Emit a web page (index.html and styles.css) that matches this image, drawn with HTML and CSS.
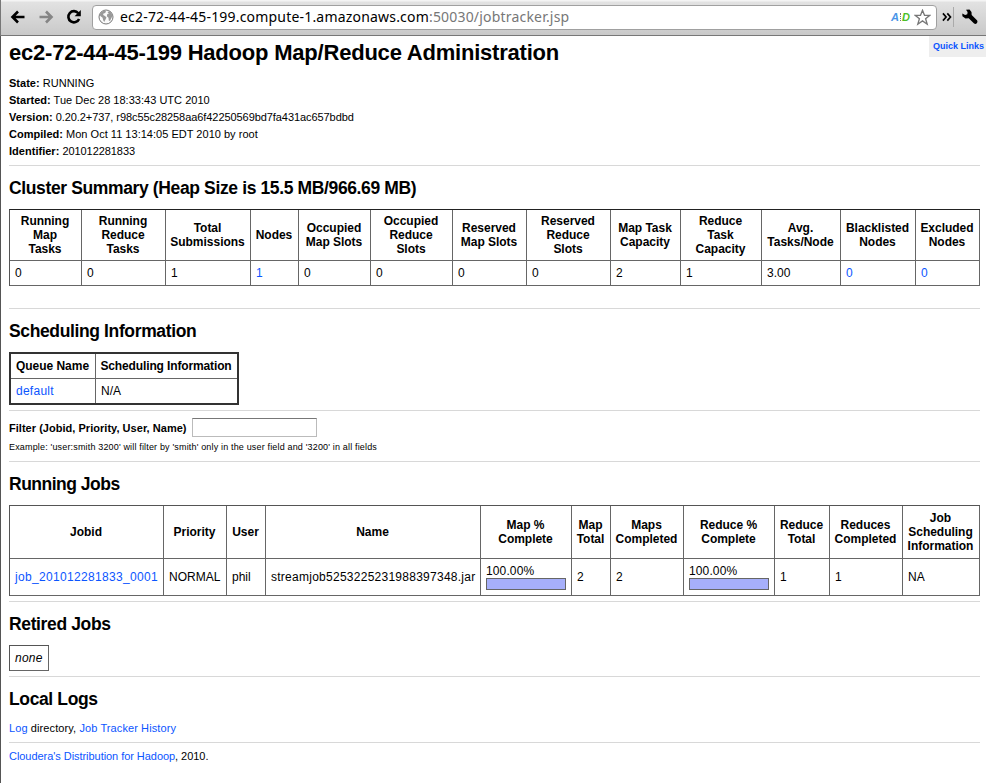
FILE: index.html
```html
<!DOCTYPE html>
<html lang="en">
<head>
<meta charset="utf-8">
<title>ec2-72-44-45-199 Hadoop Map/Reduce Administration</title>
<link rel="stylesheet" href="styles.css">
</head>
<body>
<div class="toolbar">
  <svg class="nav-icon back" width="16" height="14" viewBox="0 0 16 14"><path d="M14.500 7H3M8 1.500L2.500 7 8 12.500"/></svg>
  <svg class="nav-icon forward" width="16" height="14" viewBox="0 0 16 14"><path d="M1.500 7H13M8 1.500L13.500 7 8 12.500"/></svg>
  <svg class="nav-icon reload" width="16" height="16" viewBox="0 0 16 16"><path d="M12.300 4.200A5.600 5.600 0 1 0 13.100 10"/><path class="solid" d="M14.800 1v6.300H8.600z"/></svg>
  <div class="omnibox">
    <svg class="globe" width="16" height="16" viewBox="0 0 16 16"><circle cx="8" cy="8" r="7" fill="#fafafa" stroke="#777"/><path fill="#999" d="M3 3.500l3-2 2 .8-.8 1.600-1.700.7-.4 1.500 1.900 1 1.500 1.300-1 2-1.300 2.600-1-1.800-.6-2.500L2.300 7l-.6-1.500zM9.500 3l2-1 2 2 1 3-1.200 2.300-1.300 2.700-1.200-.6-.3-2.600-1.700-1.500.5-2.300 1.500-.3z"/></svg>
    <span class="url">ec2-72-44-45-199.compute-1.amazonaws.com<span class="path">:50030/jobtracker.jsp</span></span>
    <span class="aid"><b class="a">A</b><i class="bar"></i><b class="d">D</b></span>
    <svg class="star" width="17" height="17" viewBox="0 0 17 17"><path d="M8.500 1.300l2 5h5.300l-4.200 3.400 1.600 5.500-4.700-3.300-4.700 3.300 1.600-5.500L1.200 6.300h5.300z"/></svg>
  </div>
  <svg class="more" width="11" height="10" viewBox="0 0 11 10"><path d="M1 1l3.500 4L1 9M5.800 1l3.500 4-3.500 4"/></svg>
  <span class="divider"></span>
  <svg class="wrench" width="16" height="16" viewBox="0 0 16 16"><path d="M4 .8L7.500.6l2 2.400.2 3 5.500 5.500q.8 1.500-.4 2.700t-2.700.3L6.700 9.200l-3.200.3L.4 7.200l-.1-2.600 2.800 1.500 2.200-.8.3-2.200z"/></svg>
</div>
<main class="page">
  <a class="quick" href="#"><span>Quick Links</span></a>
  <h1><span>ec2-72-44-45-199 Hadoop Map/Reduce Administration</span></h1>
  <div class="facts">
    <div><b>State:</b> RUNNING</div>
    <div><b>Started:</b> Tue Dec 28 18:33:43 UTC 2010</div>
    <div><b>Version:</b> <span class="version">0.20.2+737, r98c55c28258aa6f42250569bd7fa431ac657bdbd</span></div>
    <div><b>Compiled:</b> Mon Oct 11 13:14:05 EDT 2010 by root</div>
    <div><b>Identifier:</b> <span class="version">201012281833</span></div>
  </div>
  <section class="cluster">
    <h2 class="h-cluster">Cluster Summary (Heap Size is 15.5 MB/966.69 MB)</h2>
    <table class="grid summary">
      <colgroup><col class="w72"><col class="w84"><col class="w85"><col class="w48"><col class="w72"><col class="w82"><col class="w74"><col class="w84"><col class="w70"><col class="w81"><col class="w79"><col class="w75"><col class="w64"></colgroup>
      <tr><th>Running<br>Map<br>Tasks</th><th>Running<br>Reduce<br>Tasks</th><th>Total<br>Submissions</th><th>Nodes</th><th>Occupied<br>Map Slots</th><th>Occupied<br>Reduce<br>Slots</th><th>Reserved<br>Map Slots</th><th>Reserved<br>Reduce<br>Slots</th><th>Map Task<br>Capacity</th><th>Reduce<br>Task<br>Capacity</th><th>Avg.<br>Tasks/Node</th><th>Blacklisted<br>Nodes</th><th>Excluded<br>Nodes</th></tr>
      <tr><td>0</td><td>0</td><td>1</td><td><a href="#">1</a></td><td>0</td><td>0</td><td>0</td><td>0</td><td>2</td><td>1</td><td>3.00</td><td><a href="#">0</a></td><td><a href="#">0</a></td></tr>
    </table>
  </section>
  <section class="scheduling">
    <h2 class="h-sched">Scheduling Information</h2>
    <table class="grid queues">
      <colgroup><col class="w85"><col class="w141"></colgroup>
      <tr><th>Queue Name</th><th class="tight">Scheduling Information</th></tr>
      <tr><td><a class="loose" href="#">default</a></td><td>N/A</td></tr>
    </table>
  </section>
  <section class="filter">
    <div class="filter-row"><label for="filter">Filter (Jobid, Priority, User, Name)</label><input id="filter" type="text"></div>
    <div class="example"><span>Example: 'user:smith 3200' will filter by 'smith' only in the user field and '3200' in all fields</span></div>
  </section>
  <section class="running">
    <h2 class="h-running">Running Jobs</h2>
    <table class="grid jobs">
      <colgroup><col class="w154"><col class="w63"><col class="w39"><col class="w215"><col class="w91"><col class="w39"><col class="w73"><col class="w91"><col class="w55"><col class="w73"><col class="w77"></colgroup>
      <tr><th>Jobid</th><th>Priority</th><th>User</th><th>Name</th><th>Map %<br>Complete</th><th>Map<br>Total</th><th>Maps<br>Completed</th><th>Reduce %<br>Complete</th><th>Reduce<br>Total</th><th>Reduces<br>Completed</th><th>Job<br>Scheduling<br>Information</th></tr>
      <tr><td><a class="jobid" href="#">job_201012281833_0001</a></td><td>NORMAL</td><td>phil</td><td class="loose">streamjob5253225231988397348.jar</td><td><span class="percent">100.00%</span><div class="progress"></div></td><td>2</td><td>2</td><td><span class="percent">100.00%</span><div class="progress"></div></td><td>1</td><td>1</td><td>NA</td></tr>
    </table>
  </section>
  <section class="retired">
    <h2 class="h-retired">Retired Jobs</h2>
    <table class="grid none"><tr><td><i>none</i></td></tr></table>
  </section>
  <section class="logs">
    <h2 class="h-logs">Local Logs</h2>
    <p><a href="#">Log</a> directory, <a href="#">Job Tracker History</a></p>
  </section>
  <footer><a href="#">Cloudera's Distribution for Hadoop</a>, 2010.</footer>
</main>
</body>
</html>
```
FILE: styles.css
```css
* { box-sizing: border-box; }
body { margin: 0; background: #fff; color: #000; font: 11px/17px "Liberation Sans", Arial, sans-serif; height: 783px; overflow: hidden; }
a { color: #0b55ff; text-decoration: none; }

.toolbar { height: 36px; display: flex; align-items: center; padding: 0 8px 1px 9px; background: linear-gradient(#f4f4f4 0, #f4f4f4 1px, #e2e2e2 2px, #c9c9c9 100%); border-bottom: 1px solid #777; border-left: 1px solid #777; }
.nav-icon { fill: none; stroke: #000; stroke-width: 2.600; flex: none; }
.forward { stroke: #858585; margin-left: 12px; }
.reload { margin-left: 12px; }
.solid { fill: #000; stroke: none; }
.omnibox { width: 845px; height: 25px; margin-left: 10px; display: flex; align-items: center; background: #fff; border: 1px solid #a0a0a0; border-radius: 4px; padding: 0 5px; flex: none; }
.globe { margin-right: 6px; flex: none; }
.url { font: 14px/22px "Noto Sans", sans-serif; letter-spacing: .19px; white-space: nowrap; flex: 1; }
.path { color: #777; }
.aid { display: flex; align-items: center; font: italic 11px/14px "Liberation Sans", sans-serif; margin-right: 4px; }
.a { color: #4a95e8; }
.d { color: #4cbf28; }
.bar { width: 0; height: 8px; border-left: 1px dotted #777; margin: 0 1px; }
.star { fill: #fff; stroke: #777; stroke-width: 1.300; }
.more { fill: none; stroke: #000; stroke-width: 1.800; margin-left: 5px; }
.divider { width: 1px; height: 20px; background: #aaa; margin: 0 8px 0 1px; }
.wrench { flex: none; }

.page { position: relative; height: 747px; padding: 0 6px 0 8px; border-left: 1px solid #555; }
.quick { position: absolute; top: 0; right: 0; width: 57px; height: 21px; padding-left: 4px; background: #eee; font: bold 9px/20px "Liberation Sans", sans-serif; white-space: nowrap; }
h1 { margin: 0; height: 39px; padding-top: 3px; font-size: 22px; line-height: 27px; letter-spacing: -.21px; white-space: nowrap; }
h2 { margin: 0; font-size: 17.500px; line-height: 20px; letter-spacing: -.37px; white-space: nowrap; }
.h-running { letter-spacing: -.5px; }
.facts { height: 90px; letter-spacing: .02px; white-space: nowrap; }
.version { letter-spacing: -.07px; }
section, footer { border-top: 1px solid #d8d8d8; }
.cluster { height: 143px; padding-top: 12px; }
.cluster h2 { height: 31px; }
.scheduling { height: 102px; padding-top: 12px; }
.scheduling h2 { height: 31px; }
.filter { height: 51px; padding-top: 7px; }
.running { height: 140px; padding-top: 12px; }
.running h2 { height: 31px; }
.retired { height: 75px; padding-top: 12px; }
.retired h2 { height: 31px; }
.logs { height: 66px; padding-top: 12px; }
.logs h2 { height: 31px; }
.logs p { margin: 0; letter-spacing: .1px; }
footer { padding-top: 5px; letter-spacing: -.05px; }

.grid { table-layout: fixed; border-collapse: separate; border-spacing: 0; border: 0 solid #555; border-width: 1px 0 0 1px; width: 971px; font-size: 12px; line-height: 14px; white-space: nowrap; }
.grid th, .grid td { padding: 0 0 0 5px; border: 0 solid #666; border-width: 0 1px 1px 0; text-align: left; vertical-align: middle; }
.grid th { padding: 0 1px 0 0; text-align: center; letter-spacing: -.02px; }
.summary { border-top-color: #222; }
.summary tr:first-child { height: 51px; }
.summary tr:last-child { height: 25px; }
.queues { width: 230px; border: 2px solid #333; }
.queues tr:first-child { height: 25px; }
.queues tr:last-child { height: 24px; }
.queues tr > :last-child { border-right: 0; }
.queues tr:last-child > td { border-bottom: 0; }
.grid .tight { letter-spacing: -.13px; }
.loose { letter-spacing: .26px; }
.jobid { letter-spacing: .33px; }
.percent { letter-spacing: .12px; }
.jobs tr:first-child { height: 53px; }
.jobs tr:last-child { height: 37px; }
.none { width: 40px; }
.none tr { height: 25px; }
.none i { letter-spacing: .25px; }
.progress { width: 80px; height: 12px; background: #a6affa; border: 1px solid #666; }

.w39 { width: 39px; } .w48 { width: 48px; } .w55 { width: 55px; } .w63 { width: 63px; } .w64 { width: 64px; }
.w70 { width: 70px; } .w72 { width: 72px; } .w73 { width: 73px; } .w74 { width: 74px; } .w75 { width: 75px; }
.w77 { width: 77px; } .w79 { width: 79px; } .w81 { width: 81px; } .w82 { width: 82px; } .w84 { width: 84px; }
.w85 { width: 85px; } .w91 { width: 91px; } .w141 { width: 141px; } .w154 { width: 154px; } .w215 { width: 215px; }

.filter-row { display: flex; height: 20px; align-items: center; font-weight: bold; white-space: nowrap; }
.filter-row label { width: 183px; letter-spacing: .03px; }
.filter-row input { width: 125px; height: 19px; margin-top: -1px; border: 1px solid #bbb; border-top: 1px solid #777; padding: 0; background: #fff; }
.example { font-size: 9px; line-height: 19px; letter-spacing: .165px; white-space: nowrap; }
```
